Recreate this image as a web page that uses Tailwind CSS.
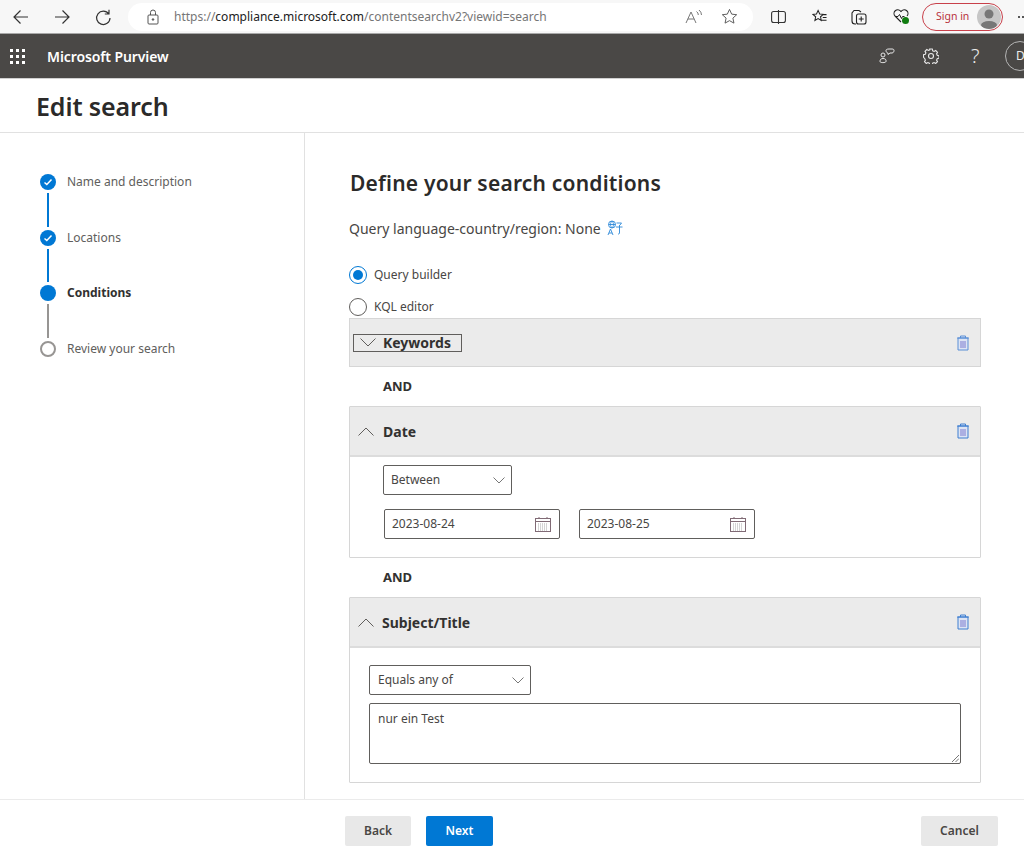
<!DOCTYPE html>
<html lang="en">
<head>
<meta charset="utf-8">
<title>Edit search</title>
<script src="https://cdn.jsdelivr.net/npm/@tailwindcss/browser@4"></script>
</head>
<body class="bg-white overflow-hidden">
<div class="w-[1024px] h-[853px] overflow-hidden flex flex-col font-['Noto_Sans','Open_Sans',sans-serif] text-[#323130]">

  <!-- browser toolbar -->
  <div class="h-[34px] shrink-0 bg-[#f7f7f7] border-b border-[#a8a8a8] flex items-center relative">
    <div class="flex items-center w-[128px] shrink-0 pl-[12px] gap-[23px] text-[#333]">
      <svg class="w-[18px] h-[18px]" viewBox="0 0 18 18" fill="none" stroke="#333" stroke-width="1.2"><path d="M16 9H2M8.5 2.5 2 9l6.5 6.5"/></svg>
      <svg class="w-[18px] h-[18px]" viewBox="0 0 18 18" fill="none" stroke="#333" stroke-width="1.2"><path d="M2 9h14M9.500 2.500 16 9l-6.500 6.500"/></svg>
      <svg class="w-[18px] h-[18px]" viewBox="0 0 18 18" fill="none" stroke="#333" stroke-width="1.2"><path d="M14.800 6A6.700 6.700 0 1 0 16 10M15 1.800V6h-4.200"/></svg>
    </div>
    <div class="w-[625px] h-[28px] bg-white rounded-full flex items-center shrink-0">
      <svg class="w-[14px] h-[16px] ml-[18px]" viewBox="0 0 14 16" fill="none" stroke="#555" stroke-width="1"><rect x="2" y="6" width="10" height="9" rx="1"/><path d="M4.500 6V3.500a2.500 2.500 0 0 1 5 0V6"/><circle cx="7" cy="10.500" r=".8" fill="#555"/></svg>
      <div class="ml-[14px] text-[12px] text-[#767676] whitespace-nowrap">https://<span class="text-[#222]">compliance.microsoft.com</span>/contentsearchv2?viewid=search</div>
      <svg class="w-[18px] h-[16px] ml-auto" viewBox="0 0 18 16" fill="none" stroke="#777" stroke-width="1"><path d="M1 14 6 3l5 11M2.800 10h6.400M11.500 2.500a4 4 0 0 1 1.800 3.500M14 1a6.500 6.500 0 0 1 2.500 5"/></svg>
      <svg class="w-[17px] h-[17px] ml-[18px] mr-[15px]" viewBox="0 0 18 18" fill="none" stroke="#555" stroke-width="1"><path d="m9 1.500 2.300 5 5.300.6-4 3.600 1.100 5.300L9 13.400 4.300 16l1.100-5.300-4-3.600 5.300-.6z"/></svg>
    </div>
    <div class="flex items-center ml-[18px] gap-[26px] shrink-0">
      <svg class="w-[15px] h-[14px]" viewBox="0 0 15 14" fill="none" stroke="#333" stroke-width="1.100"><rect x=".6" y="1.500" width="13.800" height="11" rx="2"/><path d="M7.500 0v14"/></svg>
      <svg class="w-[15px] h-[15px]" viewBox="0 0 16 16" fill="none" stroke="#222" stroke-width="1.100"><path d="m6.500 1.500 1.700 3.800 3.800.4-2.900 2.600.8 3.900-3.400-2-3.400 2 .8-3.900L1 5.700l3.800-.4zM12 6h3.500M11.500 9h4M10.500 12h5"/></svg>
      <svg class="w-[16px] h-[16px] -ml-[2px]" viewBox="0 0 16 16" fill="none" stroke="#222" stroke-width="1.100"><path d="M5 15H4a3 3 0 0 1-3-3V4l2-2.500h5L10 3"/><rect x="5.500" y="5" width="9.500" height="10" rx="2"/><path d="M10.200 7.500v5M7.700 10h5"/></svg>
      <svg class="w-[17px] h-[17px]" viewBox="0 0 17 17" fill="none"><path d="M8 14 2 8a3.500 3.500 0 0 1 5.500-5L8 3.500l.5-.5A3.500 3.500 0 0 1 14 8" stroke="#222" stroke-width="1.100"/><path d="M2 8.500h3l1.500-2 2 4 1-2h2" stroke="#222" stroke-width="1"/><circle cx="12.500" cy="12.500" r="3.500" fill="#107c10"/></svg>
    </div>
    <div class="ml-[12px] w-[81px] h-[28px] rounded-full border border-[#c8404a] flex items-center pl-[13px] shrink-0">
      <span class="text-[10.500px] text-[#b8323c]">Sign in</span>
      <span class="ml-auto mr-[1px] w-[24px] h-[24px] rounded-full bg-[#c6c6c6] overflow-hidden flex items-center justify-center">
        <svg class="w-[24px] h-[24px]" viewBox="0 0 24 24" fill="#777"><circle cx="12" cy="9" r="4.500"/><ellipse cx="12" cy="20" rx="8" ry="4"/></svg>
      </span>
    </div>
    <div class="ml-[15px] flex gap-[2px] shrink-0"><span class="w-[2px] h-[2px] rounded-full bg-[#222]"></span><span class="w-[2px] h-[2px] rounded-full bg-[#222]"></span></div>
  </div>

  <!-- suite header -->
  <div class="h-[45px] shrink-0 bg-[#4a4846] flex items-center border-b border-[#d0d0d0] text-white relative overflow-hidden">
    <svg class="w-[15px] h-[15px] ml-[10px]" viewBox="0 0 15 15" fill="#fff">
      <rect x="0" y="0" width="3" height="3"/><rect x="6" y="0" width="3" height="3"/><rect x="12" y="0" width="3" height="3"/>
      <rect x="0" y="6" width="3" height="3"/><rect x="6" y="6" width="3" height="3"/><rect x="12" y="6" width="3" height="3"/>
      <rect x="0" y="12" width="3" height="3"/><rect x="6" y="12" width="3" height="3"/><rect x="12" y="12" width="3" height="3"/>
    </svg>
    <div class="ml-[22px] text-[14px] font-semibold tracking-[-0.1px]">Microsoft Purview</div>
    <div class="ml-auto flex items-center text-[#ececec]">
      <svg class="w-[16px] h-[16px]" viewBox="0 0 16 16" fill="none" stroke="#e8e8e8" stroke-width="1"><circle cx="4" cy="7" r="2"/><path d="M1 13.500c0-2 1-3 3-3s3.500 1 3 3c-.3 1.500-6 1.500-6 0z"/><path d="M7 2.500c0-1 1-1.500 3-1.500h3c1.500 0 2 .6 2 1.500S14.500 5 13 5h-2l-2 1.500V5C8 5 7 4 7 2.500z"/></svg>
      <svg class="w-[16px] h-[16px] ml-[28px]" viewBox="0 0 16 16" fill="none" stroke="#e8e8e8" stroke-width="1.100"><circle cx="8" cy="8" r="2.500"/><path d="M6.700 1h2.600l.4 1.800 1.400.6L12.700 2.500l1.800 1.800-.9 1.600.6 1.400 1.800.4v2.600l-1.800.4-.6 1.400.9 1.600-1.800 1.800-1.600-.9-1.400.6-.4 1.800H6.700l-.4-1.800-1.400-.6-1.600.9-1.800-1.800.9-1.600-.6-1.400L.5 9.300V6.700l1.800-.4.6-1.400-.9-1.600 1.800-1.800 1.600.9 1.400-.6z"/></svg>
      <span class="ml-[32px] w-[10px] text-[20px] font-light leading-none">?</span>
      <div class="ml-[24px] -mr-[11px] w-[30px] h-[30px] rounded-full border border-[#b5b5b5] flex items-center pl-[10px] text-[12px]">D</div>
    </div>
  </div>

  <!-- title -->
  <div class="h-[54px] shrink-0 border-b border-[#e1e1e1] pl-[36px] flex items-center">
    <h1 class="text-[25px] font-semibold text-[#2b2a29] tracking-[-0.1px] leading-none pt-[2px]">Edit search</h1>
  </div>

  <!-- body -->
  <div class="flex-1 flex min-h-0">
    <!-- stepper -->
    <nav class="w-[305px] shrink-0 border-r border-[#e1e1e1] pl-[40px] pt-[41px] text-[12px] text-[#605e5c]">
      <div class="flex items-center h-[16px] gap-[11px]">
        <span class="w-[16px] h-[16px] rounded-full bg-[#0078d4] flex items-center justify-center"><svg class="w-[10px] h-[10px]" viewBox="0 0 10 10" fill="none" stroke="#fff" stroke-width="1.500"><path d="m1.500 5.500 2.300 2L8.500 2.500"/></svg></span>
        <span>Name and description</span>
      </div>
      <div class="w-[2px] h-[34px] bg-[#0078d4] ml-[7px] my-[3px]"></div>
      <div class="flex items-center h-[16px] gap-[11px]">
        <span class="w-[16px] h-[16px] rounded-full bg-[#0078d4] flex items-center justify-center"><svg class="w-[10px] h-[10px]" viewBox="0 0 10 10" fill="none" stroke="#fff" stroke-width="1.500"><path d="m1.500 5.500 2.300 2L8.500 2.500"/></svg></span>
        <span>Locations</span>
      </div>
      <div class="w-[2px] h-[33px] bg-[#0078d4] ml-[7px] my-[3px]"></div>
      <div class="flex items-center h-[16px] gap-[11px]">
        <span class="w-[16px] h-[16px] rounded-full bg-[#0078d4]"></span>
        <span class="font-bold text-[#323130]">Conditions</span>
      </div>
      <div class="w-[2px] h-[34px] bg-[#979593] ml-[7px] my-[3px]"></div>
      <div class="flex items-center h-[16px] gap-[11px]">
        <span class="w-[16px] h-[16px] rounded-full bg-white border-2 border-[#979593]"></span>
        <span>Review your search</span>
      </div>
    </nav>

    <!-- main -->
    <main class="flex-1 pl-[44px] pr-[43px] min-w-0">
      <h2 class="text-[21px] font-semibold text-[#2b2a29] leading-[26px] mt-[37px] ml-[1px] tracking-[0.2px]">Define your search conditions</h2>
      <div class="mt-[22px] h-[20px] flex items-center text-[14px] text-[#484644]">
        Query language-country/region: None
        <svg class="w-[16px] h-[16px] ml-[6px]" viewBox="0 0 16 16" fill="none" stroke="#2b88d8" stroke-width=".9"><circle cx="5" cy="4.500" r="3.500"/><path d="M1.500 4.500h7M5 1c-2 2-2 5 0 7M5 1c2 2 2 5 0 7M9.500 3h5l-1.500 2M9 7h6.500M12.500 5v8c0 1-1 1-1.500 1M1 15l2.500-6L6 15M2 13h3"/></svg>
      </div>
      <label class="mt-[27px] flex items-center h-[20px] text-[12px] text-[#484644]">
        <span class="w-[18px] h-[18px] rounded-full border border-[#0078d4] flex items-center justify-center mr-[7px]"><span class="w-[10px] h-[10px] rounded-full bg-[#0078d4]"></span></span>
        Query builder
      </label>
      <label class="mt-[12px] flex items-center h-[20px] text-[12px] text-[#484644]">
        <span class="w-[18px] h-[18px] rounded-full border border-[#605e5c] mr-[7px]"></span>
        KQL editor
      </label>

      <!-- Keywords -->
      <section class="mt-[1px] h-[49px] bg-[#ebebeb] border border-[#d6d6d6] flex items-center pl-[3px] pr-[10px]">
        <div class="w-[109px] h-[18px] border border-[#605e5c] flex items-center pl-[6px]">
          <svg class="w-[16px] h-[9px]" viewBox="0 0 16 9" fill="none" stroke="#605e5c"><path d="m.5.500 7.500 7.500L15.500.500"/></svg>
          <span class="ml-[7px] text-[14px] font-bold text-[#323130]">Keywords</span>
        </div>
        <svg class="ml-auto w-[14px] h-[16px]" viewBox="0 0 14 16" fill="#dde4f4" stroke="#5a8fd6"><path d="M1 3h12M4.500 3V1h5v2M2 3v12h10V3z"/><path d="M5 6v7M7 6v7M9 6v7" stroke="#7a7ad0"/></svg>
      </section>

      <div class="pl-[34px] h-[39px] flex items-center text-[13px] font-bold text-[#323130]">AND</div>

      <!-- Date -->
      <section class="h-[152px] border border-[#d6d6d6] rounded-[1px]">
        <div class="h-[50px] bg-[#ebebeb] border-b-2 border-[#dcdcdc] flex items-center pl-[8px] pr-[10px]">
          <svg class="w-[16px] h-[9px]" viewBox="0 0 16 9" fill="none" stroke="#605e5c"><path d="m.5 8.500L8 1l7.500 7.500"/></svg>
          <span class="ml-[9px] text-[14px] font-bold text-[#323130]">Date</span>
          <svg class="ml-auto w-[14px] h-[16px]" viewBox="0 0 14 16" fill="#dde4f4" stroke="#3f7fd0"><path d="M1 3h12M4.500 3V1h5v2M2 3v12h10V3z"/><path d="M5 6v7M7 6v7M9 6v7" stroke="#7a7ad0"/></svg>
        </div>
        <div class="pl-[33px] pt-[8px]">
          <div class="w-[129px] h-[30px] border border-[#605e5c] rounded-[2px] flex items-center pl-[7px] pr-[6px] text-[12px] text-[#484644]">
            Between
            <svg class="ml-auto w-[12px] h-[7px]" viewBox="0 0 12 7" fill="none" stroke="#777"><path d="m.5.500 5.500 5.500L11.500.500"/></svg>
          </div>
          <div class="mt-[14px] ml-[1px] flex gap-[19px]">
            <div class="w-[176px] h-[30px] border border-[#605e5c] rounded-[2px] flex items-center pl-[7px] pr-[8px] text-[12px] text-[#484644]">
              2023-08-24
              <svg class="ml-auto w-[16px] h-[15px]" viewBox="0 0 16 15" fill="none" stroke="#806a75"><rect x=".5" y="1.500" width="15" height="13"/><path d="M.5 4.500h15M4 0v2M12 0v2" /><path d="M3 7h10M3 9h10M3 11h10M3 13h10" stroke="#aaa" stroke-dasharray="1 1"/></svg>
            </div>
            <div class="w-[176px] h-[30px] border border-[#605e5c] rounded-[2px] flex items-center pl-[7px] pr-[8px] text-[12px] text-[#484644]">
              2023-08-25
              <svg class="ml-auto w-[16px] h-[15px]" viewBox="0 0 16 15" fill="none" stroke="#806a75"><rect x=".5" y="1.500" width="15" height="13"/><path d="M.5 4.500h15M4 0v2M12 0v2" /><path d="M3 7h10M3 9h10M3 11h10M3 13h10" stroke="#aaa" stroke-dasharray="1 1"/></svg>
            </div>
          </div>
        </div>
      </section>

      <div class="pl-[34px] h-[39px] flex items-center text-[13px] font-bold text-[#323130]">AND</div>

      <!-- Subject -->
      <section class="h-[186px] border border-[#d6d6d6] rounded-[1px]">
        <div class="h-[50px] bg-[#ebebeb] border-b-2 border-[#dcdcdc] flex items-center pl-[8px] pr-[10px]">
          <svg class="w-[16px] h-[9px]" viewBox="0 0 16 9" fill="none" stroke="#605e5c"><path d="m.5 8.500L8 1l7.500 7.500"/></svg>
          <span class="ml-[8px] text-[14px] font-bold text-[#323130]">Subject/Title</span>
          <svg class="ml-auto w-[14px] h-[16px]" viewBox="0 0 14 16" fill="#dde4f4" stroke="#3f7fd0"><path d="M1 3h12M4.500 3V1h5v2M2 3v12h10V3z"/><path d="M5 6v7M7 6v7M9 6v7" stroke="#7a7ad0"/></svg>
        </div>
        <div class="pl-[19px] pr-[19px] pt-[17px]">
          <div class="w-[162px] h-[30px] border border-[#605e5c] rounded-[2px] flex items-center pl-[8px] pr-[6px] text-[12px] text-[#484644]">
            Equals any of
            <svg class="ml-auto w-[12px] h-[7px]" viewBox="0 0 12 7" fill="none" stroke="#777"><path d="m.5.500 5.500 5.500L11.500.500"/></svg>
          </div>
          <div class="mt-[8px] h-[61px] border border-[#605e5c] rounded-[2px] pl-[8px] pt-[7px] text-[12px] leading-[16px] text-[#484644] relative">
            nur ein Test
            <svg class="absolute right-[1px] bottom-[1px] w-[7px] h-[7px]" viewBox="0 0 7 7" fill="none" stroke="#777"><path d="M0 7 7 0M3.500 7 7 3.500"/></svg>
          </div>
        </div>
      </section>
    </main>
  </div>

  <!-- footer -->
  <div class="h-[54px] shrink-0 border-t border-[#ebebeb] flex items-start pt-[16px] pl-[345px] text-[12px] font-semibold">
    <button class="w-[66px] h-[30px] bg-[#e8e8e8] rounded-[2px] text-[#484644]">Back</button>
    <button class="ml-[15px] w-[67px] h-[30px] bg-[#0078d4] rounded-[2px] text-white">Next</button>
    <button class="ml-[428px] w-[77px] h-[30px] bg-[#e8e8e8] rounded-[2px] text-[#484644]">Cancel</button>
  </div>
</div>
</body>
</html>
